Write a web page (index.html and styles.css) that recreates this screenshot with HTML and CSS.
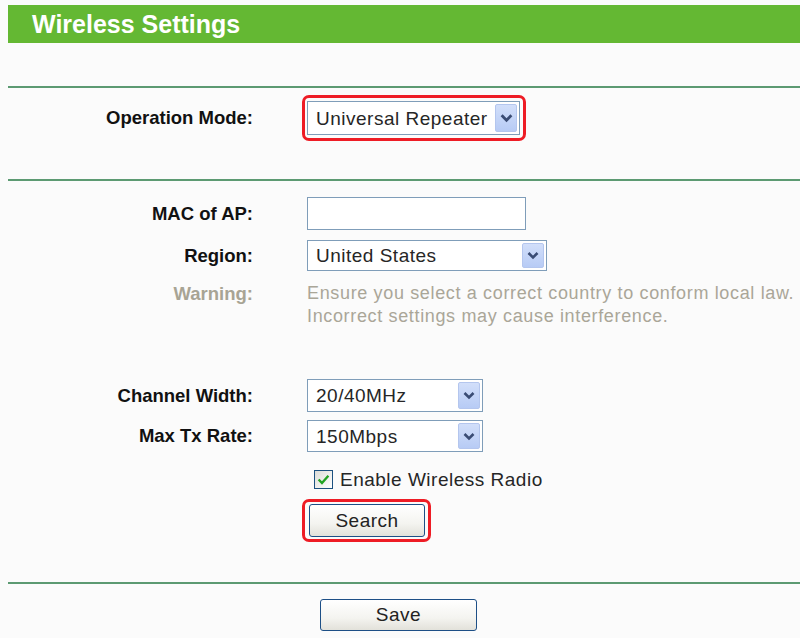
FILE: index.html
```html
<!DOCTYPE html>
<html>
<head>
<meta charset="utf-8">
<link rel="stylesheet" href="styles.css">
</head>
<body>
<div class="header">Wireless Settings</div>
<div class="rule rule-first"></div>
<div class="section s1">
  <div class="row">
    <div class="label">Operation Mode:</div>
    <div class="ctrl">
      <span class="hl hl-select">
        <span class="select w-op"><span class="val">Universal Repeater</span><span class="arrow"><svg viewBox="0 0 12 9" width="13" height="10"><path d="M1.5 2 L6 6.5 L10.5 2" fill="none" stroke="#3a4c74" stroke-width="2.6"/></svg></span></span>
      </span>
    </div>
  </div>
</div>
<div class="rule"></div>
<div class="section s2">
  <div class="row r-mac">
    <div class="label">MAC of AP:</div>
    <div class="ctrl"><span class="input"></span></div>
  </div>
  <div class="row r-region">
    <div class="label">Region:</div>
    <div class="ctrl"><span class="select w-region"><span class="val">United States</span><span class="arrow"><svg viewBox="0 0 12 9" width="12" height="9"><path d="M1.5 2 L6 6.5 L10.5 2" fill="none" stroke="#3a4c74" stroke-width="2.6"/></svg></span></span></div>
  </div>
  <div class="row r-warn">
    <div class="label gray">Warning:</div>
    <div class="ctrl warn">Ensure you select a correct country to conform local law.<br>Incorrect settings may cause interference.</div>
  </div>
  <div class="row r-channel">
    <div class="label">Channel Width:</div>
    <div class="ctrl"><span class="select w-small"><span class="val">20/40MHz</span><span class="arrow"><svg viewBox="0 0 12 9" width="12" height="9"><path d="M1.5 2 L6 6.5 L10.5 2" fill="none" stroke="#3a4c74" stroke-width="2.6"/></svg></span></span></div>
  </div>
  <div class="row r-rate">
    <div class="label">Max Tx Rate:</div>
    <div class="ctrl"><span class="select w-small h32"><span class="val">150Mbps</span><span class="arrow"><svg viewBox="0 0 12 9" width="12" height="9"><path d="M1.5 2 L6 6.5 L10.5 2" fill="none" stroke="#3a4c74" stroke-width="2.6"/></svg></span></span></div>
  </div>
  <div class="row r-check">
    <div class="label"></div>
    <div class="ctrl check-line"><span class="checkbox"><svg viewBox="0 0 12 12" width="13" height="13"><path d="M1.5 6 L4.6 9.2 L10.5 2.6" fill="none" stroke="#22a322" stroke-width="2.2"/></svg></span><span class="check-text">Enable Wireless Radio</span></div>
  </div>
  <div class="row r-search">
    <div class="label"></div>
    <div class="ctrl"><span class="hl hl-btn"><span class="btn btn-search">Search</span></span></div>
  </div>
</div>
<div class="rule"></div>
<div class="save-row"><span class="btn btn-save">Save</span></div>
</body>
</html>
```
FILE: styles.css
```css
html, body {
  margin: 0;
  padding: 0;
  background: #fbfbfb;
  font-family: "Liberation Sans", Arial, sans-serif;
  overflow: hidden;
}
body {
  padding-top: 5px;
}
.header {
  margin-left: 8px;
  height: 38px;
  background: #64b833;
  color: #ffffff;
  font-weight: bold;
  font-size: 25px;
  line-height: 38px;
  padding-left: 24px;
}
.rule {
  margin-left: 8px;
  height: 2px;
  background: #5c9a72;
}
.rule-first {
  margin-top: 43px;
}
.section {
  display: flex;
  flex-direction: column;
}
.s1 {
  padding-top: 13px;
  padding-bottom: 44px;
}
.s2 {
  padding-top: 16px;
  padding-bottom: 45px;
}
.row {
  display: grid;
  grid-template-columns: 253px 1fr;
  column-gap: 54px;
  align-items: center;
}
.label {
  text-align: right;
  font-weight: bold;
  font-size: 18.5px;
  color: #111111;
}
.label.gray {
  color: #a8a494;
  align-self: start;
  line-height: 23px;
}
.ctrl {
  font-size: 19px;
  letter-spacing: 0.5px;
  color: #262626;
}
.select {
  display: flex;
  align-items: center;
  justify-content: space-between;
  box-sizing: border-box;
  height: 34px;
  border: 1px solid #7f9db9;
  background: #ffffff;
  padding: 2px 2px 2px 8px;
}
.select .val {
  line-height: 1;
}
.arrow {
  box-sizing: border-box;
  width: 22px;
  align-self: stretch;
  display: flex;
  align-items: center;
  justify-content: center;
  background: linear-gradient(#d2dffa, #b7cbf5);
  border: 1px solid #b4c6ee;
  border-radius: 2px;
}
.w-op { width: 213px; }
.w-region { width: 240px; height: 31px; }
.w-small { width: 176px; height: 33px; }
.h32 { height: 32px; }
.input {
  display: block;
  box-sizing: border-box;
  width: 219px;
  height: 33px;
  border: 1px solid #7f9db9;
  background: #ffffff;
}
.r-region { margin-top: 10px; }
.r-warn { margin-top: 11px; }
.warn {
  font-size: 18px;
  letter-spacing: 0.65px;
  line-height: 23px;
  color: #aaa698;
  white-space: nowrap;
}
.r-channel { margin-top: 51px; }
.r-rate { margin-top: 8px; }
.r-check { margin-top: 17px; }
.check-line {
  display: flex;
  align-items: center;
  padding-left: 7px;
  height: 20px;
}
.checkbox {
  box-sizing: border-box;
  width: 19px;
  height: 19px;
  border: 1px solid #1c5180;
  background: linear-gradient(135deg, #dcdcd7, #ffffff);
  display: flex;
  align-items: center;
  justify-content: center;
  margin-right: 7px;
}
.check-text {
  line-height: 1;
}
.r-search { margin-top: 15px; }
.hl {
  position: relative;
  display: inline-block;
  vertical-align: top;
}
.hl::after {
  content: "";
  position: absolute;
  border: 3px solid #ee1c25;
  border-radius: 7px;
}
.hl-select .select { display: flex; }
.hl-select::after {
  left: -5px; right: -6px; top: -6px; bottom: -6px;
}
.hl-btn { margin-left: 2px; }
.hl-btn::after {
  left: -7px; right: -6px; top: -5px; bottom: -5px;
}
.btn {
  display: inline-flex;
  align-items: center;
  justify-content: center;
  box-sizing: border-box;
  height: 33px;
  border: 1px solid #1d4f86;
  border-radius: 3px;
  background: linear-gradient(#ffffff, #f4f4f0 60%, #e2e1da);
  font-size: 19px;
  letter-spacing: 0.5px;
  color: #222222;
}
.btn-search { width: 116px; }
.save-row {
  padding-top: 15px;
  padding-left: 320px;
}
.btn-save { width: 157px; height: 32px; }
```
